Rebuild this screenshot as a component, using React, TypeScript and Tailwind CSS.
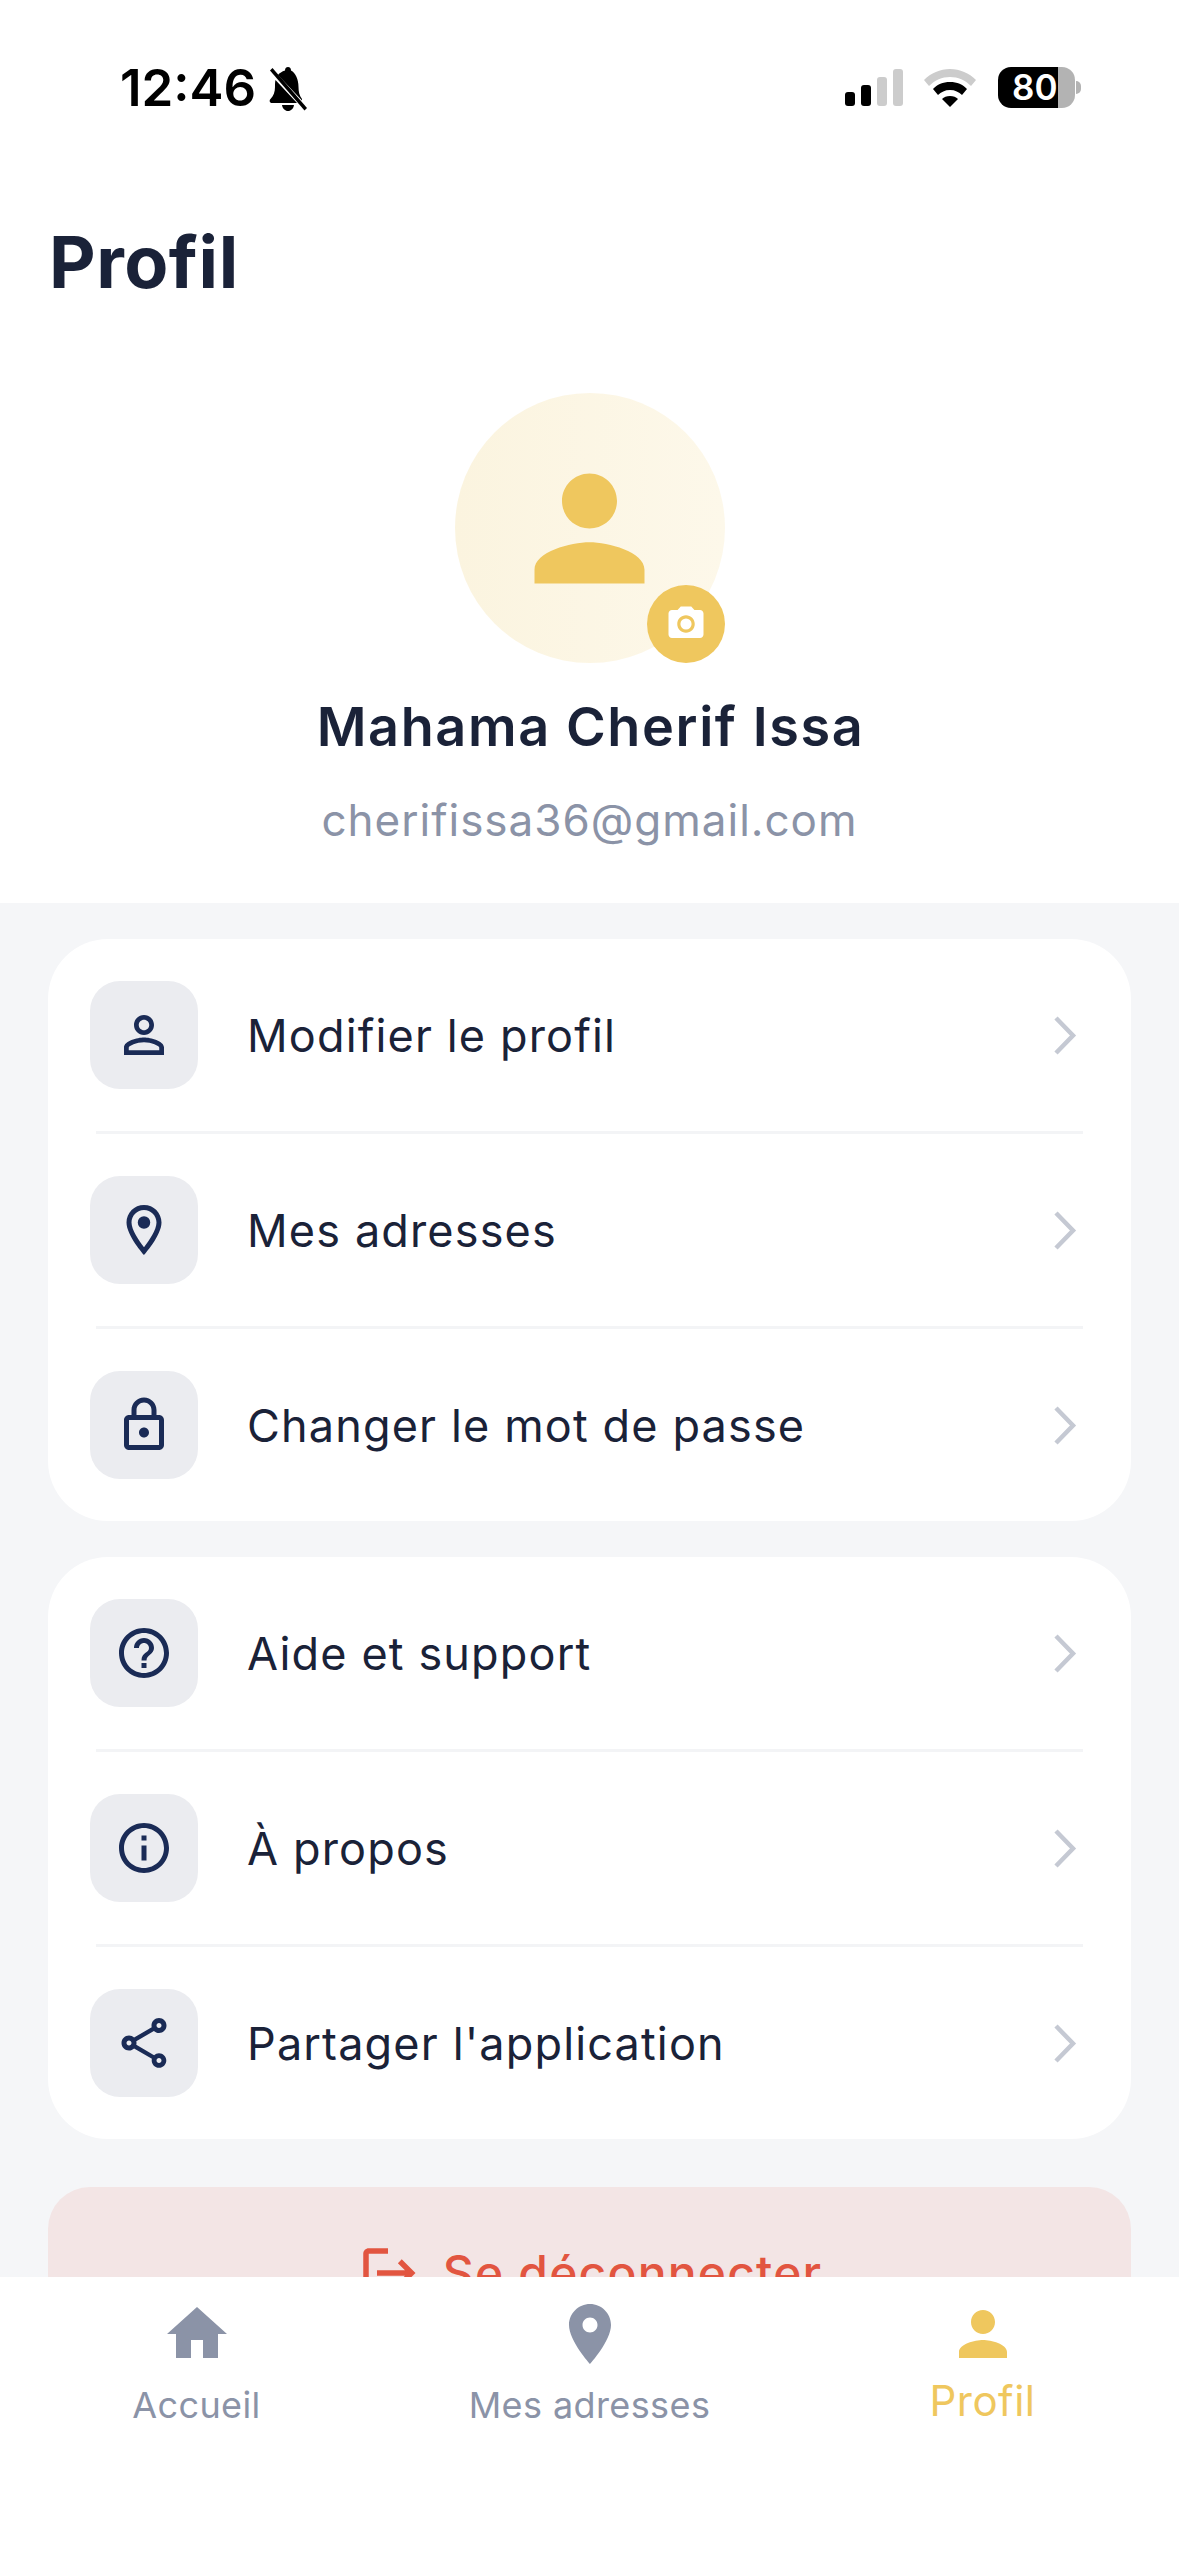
import type { ReactNode } from "react";

const paths = {
  person: "M12 12c2.21 0 4-1.79 4-4s-1.79-4-4-4-4 1.79-4 4 1.79 4 4 4zm0 2c-2.67 0-8 1.34-8 4v2h16v-2c0-2.66-5.33-4-8-4z",
  personOutline:
    "M12 5.9c1.16 0 2.1.94 2.1 2.1s-.94 2.1-2.1 2.1S9.9 9.16 9.9 8s.94-2.1 2.1-2.1m0 9c2.97 0 6.1 1.46 6.1 2.1v1.1H5.9V17c0-.64 3.13-2.1 6.1-2.1M12 4C9.79 4 8 5.79 8 8s1.79 4 4 4 4-1.79 4-4-1.79-4-4-4zm0 9c-2.67 0-8 1.34-8 4v3h16v-3c0-2.66-5.33-4-8-4z",
  pinOutline:
    "M12 2C8.13 2 5 5.13 5 9c0 5.25 7 13 7 13s7-7.75 7-13c0-3.87-3.13-7-7-7zM7 9c0-2.76 2.24-5 5-5s5 2.24 5 5c0 2.88-2.88 7.19-5 9.88C9.92 16.21 7 11.85 7 9zM12 6.5a2.5 2.5 0 1 0 0 5 2.5 2.5 0 0 0 0-5z",
  lock: "M18 8h-1V6c0-2.76-2.24-5-5-5S7 3.24 7 6v2H6c-1.1 0-2 .9-2 2v10c0 1.1.9 2 2 2h12c1.1 0 2-.9 2-2V10c0-1.1-.9-2-2-2zM9 6c0-1.66 1.34-3 3-3s3 1.34 3 3v2H9V6zm9 14H6V10h12v10zm-6-3c1.1 0 2-.9 2-2s-.9-2-2-2-2 .9-2 2 .9 2 2 2z",
  help: "M11 18h2v-2h-2v2zm1-16C6.48 2 2 6.48 2 12s4.48 10 10 10 10-4.48 10-10S17.52 2 12 2zm0 18c-4.41 0-8-3.59-8-8s3.59-8 8-8 8 3.59 8 8-3.59 8-8 8zm0-14c-2.21 0-4 1.79-4 4h2c0-1.1.9-2 2-2s2 .9 2 2c0 2-3 1.75-3 5h2c0-2.25 3-2.5 3-5 0-2.21-1.79-4-4-4z",
  info: "M11 7h2v2h-2zm0 4h2v6h-2zm1-9C6.48 2 2 6.48 2 12s4.48 10 10 10 10-4.48 10-10S17.52 2 12 2zm0 18c-4.41 0-8-3.59-8-8s3.59-8 8-8 8 3.59 8 8-3.59 8-8 8z",
  share:
    "M18 16.08c-.76 0-1.44.3-1.96.77L8.91 12.7c.05-.23.09-.46.09-.7s-.04-.47-.09-.7l7.05-4.11c.54.5 1.25.81 2.04.81 1.66 0 3-1.34 3-3s-1.34-3-3-3-3 1.34-3 3c0 .24.04.47.09.7L8.04 9.81C7.5 9.31 6.79 9 6 9c-1.66 0-3 1.34-3 3s1.34 3 3 3c.79 0 1.5-.31 2.04-.81l7.12 4.16c-.05.21-.08.43-.08.65 0 1.61 1.31 2.92 2.92 2.92s2.92-1.31 2.92-2.92-1.31-2.92-2.92-2.92zM18 4c.55 0 1 .45 1 1s-.45 1-1 1-1-.45-1-1 .45-1 1-1zM6 13c-.55 0-1-.45-1-1s.45-1 1-1 1 .45 1 1-.45 1-1 1zm12 7.02c-.55 0-1-.45-1-1s.45-1 1-1 1 .45 1 1-.45 1-1 1z",
  camera:
    "M9 2L7.17 4H4c-1.1 0-2 .9-2 2v12c0 1.1.9 2 2 2h16c1.1 0 2-.9 2-2V6c0-1.1-.9-2-2-2h-3.17L15 2H9zm3 15c-2.76 0-5-2.24-5-5s2.24-5 5-5 5 2.24 5 5-2.24 5-5 5zM12 8.8a3.2 3.2 0 1 0 0 6.4 3.2 3.2 0 0 0 0-6.4z",
  logout:
    "M17 7l-1.41 1.41L18.17 11H8v2h10.17l-2.58 2.58L17 17l5-5zM5 5h7V3H5c-1.1 0-2 .9-2 2v14c0 1.1.9 2 2 2h7v-2H5V5z",
  home: "M10 20v-6h4v6h5v-8h3L12 3 2 12h3v8z",
  pin: "M12 2C8.13 2 5 5.13 5 9c0 5.25 7 13 7 13s7-7.75 7-13c0-3.87-3.13-7-7-7zm0 9.5c-1.38 0-2.5-1.12-2.5-2.5s1.12-2.5 2.5-2.5 2.5 1.12 2.5 2.5-1.12 2.5-2.5 2.5z",
};

function Icon({ d, className }: { d: string; className: string }) {
  return (
    <svg viewBox="0 0 24 24" fill="currentColor" className={className}>
      <path d={d} />
    </svg>
  );
}

function StatusBar() {
  return (
    <div className="h-[178px] flex justify-between pt-[60px] pl-[120px] pr-[98px] text-black">
      <div className="flex items-start">
        <span className="text-[51px] leading-[56px] font-semibold">12:46</span>
        <svg viewBox="0 0 40 44" className="w-[40px] h-[44px] ml-[12px] mt-[7px]" fill="currentColor">
          <path d="M20 0c-2 0-3 1.500-3 3.500C14 4.500 11.500 6 10 8l24 25.500V32c-2.500-3-3.500-7-3.500-12 0-8-3-14-7.500-16.500C23 1.500 22 0 20 0z" />
          <path d="M7.500 13C7 15 7 17.500 7 20c0 5-1.500 9-4.500 12-1.500 1.500-1 4 1.500 4h25z" />
          <path d="M14 38h12c-.5 3.500-3 6-6 6s-5.500-2.500-6-6z" />
          <path d="M2 3.500L4.500 1 39 41l-2.500 2.500z" />
        </svg>
      </div>
      <div className="flex items-start pt-[7px]">
        <div className="flex items-end gap-[6px] h-[37px] mt-[2px]">
          <div className="w-[10px] h-[14px] rounded-[3px] bg-black" />
          <div className="w-[10px] h-[21px] rounded-[3px] bg-black" />
          <div className="w-[10px] h-[29px] rounded-[3px] bg-[#cccccc]" />
          <div className="w-[10px] h-[37px] rounded-[3px] bg-[#cccccc]" />
        </div>
        <svg viewBox="0 0 52 38" className="w-[52px] h-[38px] ml-[21px] mt-[2px]">
          <path d="M26 0C16 0 7 4 0 11l5 6C11 11 18 8 26 8s15 3 21 9l5-6C45 4 36 0 26 0z" fill="#cccccc" />
          <path d="M26 13c-7 0-13 2.500-17 7l5 6c3-3 7-5 12-5s9 2 12 5l5-6c-4-4.500-10-7-17-7z" fill="black" />
          <path d="M26 27c-3.500 0-6 1-8 3l8 8 8-8c-2-2-4.500-3-8-3z" fill="black" />
        </svg>
        <div className="flex items-center ml-[22px]">
          <div className="w-[77px] h-[41px] rounded-[13px] bg-[linear-gradient(90deg,#000000_78%,#b3b3b3_78%)] flex items-center pl-[14px]">
            <span className="text-[35px] leading-[41px] font-semibold text-white">80</span>
          </div>
          <div className="w-[5px] h-[13px] ml-[1px] rounded-r-[5px] bg-[#b3b3b3]" />
        </div>
      </div>
    </div>
  );
}

function Row({ d, label, last }: { d: string; label: string; last?: boolean }) {
  return (
    <>
      <div className="h-[192px] flex items-center pl-[42px] pr-[54px]">
        <div className="w-[108px] h-[108px] rounded-[30px] bg-[#ebecf0] flex items-center justify-center">
          <Icon d={d} className="w-[60px] h-[60px] text-[#1a2b56]" />
        </div>
        <div className="flex-1 ml-[49px] pt-[2px] text-[45px] leading-[54px] font-normal tracking-[1.15px] text-[#1a2238]">{label}</div>
        <svg viewBox="0 0 23 39" className="w-[23px] h-[39px] text-[#c5c9d3]" fill="none" stroke="currentColor" strokeWidth="4.500">
          <path d="M2 2l17 17.500L2 37" />
        </svg>
      </div>
      {!last && <div className="h-[3px] mx-[48px] bg-[#f3f4f6]" />}
    </>
  );
}

function Card({ children }: { children: ReactNode }) {
  return <div className="rounded-[60px] bg-white overflow-hidden">{children}</div>;
}

function Tab({ d, label, active }: { d: string; label: string; active?: boolean }) {
  return (
    <div className={active ? "flex flex-col items-center text-[#efc75e]" : "flex flex-col items-center text-[#8b93a7]"}>
      <Icon d={d} className="w-[72px] h-[72px]" />
      <span className={active ? "mt-[6px] text-[42px] leading-[50px] tracking-[0.5px]" : "mt-[13px] text-[36px] leading-[44px] tracking-[0.4px]"}>
        {label}
      </span>
    </div>
  );
}

export default function App() {
  return (
    <div className="w-[1179px] h-[2556px] overflow-hidden flex flex-col bg-white font-['Inter',sans-serif]">
      <div className="flex-1 min-h-0 overflow-hidden bg-[#f5f6f8]">
        <div className="bg-white h-[903px]">
          <StatusBar />
          <h1 className="pl-[49px] mt-[41px] text-[72px] leading-[86px] font-bold tracking-[0.5px] text-[#1a2238]">Profil</h1>
          <div className="flex flex-col items-center">
            <div className="relative mt-[88px] w-[270px] h-[270px] rounded-full bg-[linear-gradient(90deg,#fbf4df,#fdf8ea)] flex items-center justify-center">
              <Icon d={paths.person} className="w-[165px] h-[165px] text-[#efc75e]" />
              <div className="absolute right-0 bottom-0 w-[78px] h-[78px] rounded-full bg-[#efc75e] flex items-center justify-center">
                <Icon d={paths.camera} className="w-[42px] h-[42px] text-white" />
              </div>
            </div>
            <div className="mt-[32px] pl-[2px] text-[54px] leading-[64px] font-semibold tracking-[1.6px] text-[#1a2238]">Mahama Cherif Issa</div>
            <div className="mt-[36px] text-[44px] leading-[50px] tracking-[1px] text-[#8b93a7]">cherifissa36@gmail.com</div>
          </div>
        </div>
        <div className="px-[48px] pt-[36px] flex flex-col">
          <Card>
            <Row d={paths.personOutline} label="Modifier le profil" />
            <Row d={paths.pinOutline} label="Mes adresses" />
            <Row d={paths.lock} label="Changer le mot de passe" last />
          </Card>
          <div className="mt-[36px]">
            <Card>
              <Row d={paths.help} label="Aide et support" />
              <Row d={paths.info} label="À propos" />
              <Row d={paths.share} label="Partager l'application" last />
            </Card>
          </div>
          <div className="mt-[48px] h-[172px] rounded-[42px] bg-[#f3e5e5] flex items-center justify-center text-[#e25540] pr-[2px]">
            <Icon d={paths.logout} className="w-[66px] h-[66px]" />
            <span className="ml-[22px] text-[48px] leading-[58px] font-medium tracking-[1.2px]">Se déconnecter</span>
          </div>
        </div>
      </div>
      <div className="h-[279px] bg-white grid grid-cols-3 pt-[21px]">
        <Tab d={paths.home} label="Accueil" />
        <Tab d={paths.pin} label="Mes adresses" />
        <Tab d={paths.person} label="Profil" active />
      </div>
    </div>
  );
}
